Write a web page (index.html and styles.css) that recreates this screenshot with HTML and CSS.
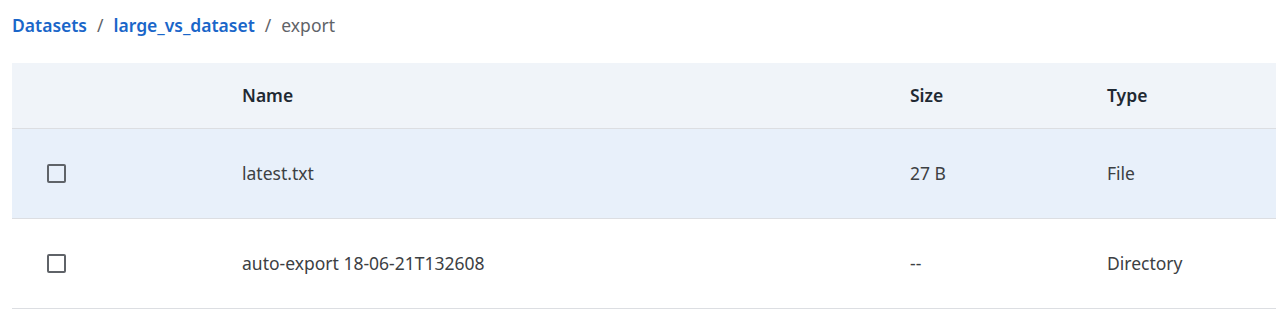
FILE: index.html
```html
<!DOCTYPE html>
<html>
<head>
<meta charset="utf-8">
<link rel="stylesheet" href="styles.css">
</head>
<body>
<nav class="crumbs">
  <a class="crumb-link" href="#">Datasets</a>
  <span class="sep">/</span>
  <a class="crumb-link" href="#">large_vs_dataset</a>
  <span class="sep">/</span>
  <span class="crumb-current">export</span>
</nav>
<div class="table">
  <div class="row head">
    <div class="cell check"></div>
    <div class="cell">Name</div>
    <div class="cell">Size</div>
    <div class="cell">Type</div>
  </div>
  <div class="row selected">
    <div class="cell check"><span class="box"></span></div>
    <div class="cell">latest.txt</div>
    <div class="cell">27 B</div>
    <div class="cell">File</div>
  </div>
  <div class="row">
    <div class="cell check"><span class="box"></span></div>
    <div class="cell">auto-export 18-06-21T132608</div>
    <div class="cell">--</div>
    <div class="cell">Directory</div>
  </div>
</div>
</body>
</html>
```
FILE: styles.css
```css
html, body {
  margin: 0;
  padding: 0;
  background: #ffffff;
  font-family: "Noto Sans", "Open Sans", sans-serif;
  font-size: 17.5px;
}
.crumbs {
  display: flex;
  align-items: center;
  gap: 9px;
  padding: 13px 0 0 12px;
  height: 24px;
  line-height: 24px;
}
.crumb-link {
  color: #1a66c9;
  font-weight: 600;
  text-decoration: none;
}
.sep {
  color: #5f6368;
  padding: 0 1px;
}
.crumb-current {
  color: #5f6368;
}
.table {
  margin: 26px 0 0 12px;
}
.row {
  display: grid;
  grid-template-columns: 230px 668px 197px 1fr;
  align-items: center;
  height: 89px;
  border-bottom: 1px solid #dcdee2;
  color: #3c4043;
}
.cell {
  padding-bottom: 2px;
}
.row.head {
  height: 65px;
  background: #f0f4f9;
  font-weight: 600;
  color: #1f2933;
}
.row.selected {
  background: #e8f0fa;
}
.cell.check {
  padding: 0 0 0 35px;
  display: flex;
  align-items: center;
}
.box {
  width: 15px;
  height: 15px;
  border: 2px solid #5f6368;
  border-radius: 2px;
  display: block;
}
```
